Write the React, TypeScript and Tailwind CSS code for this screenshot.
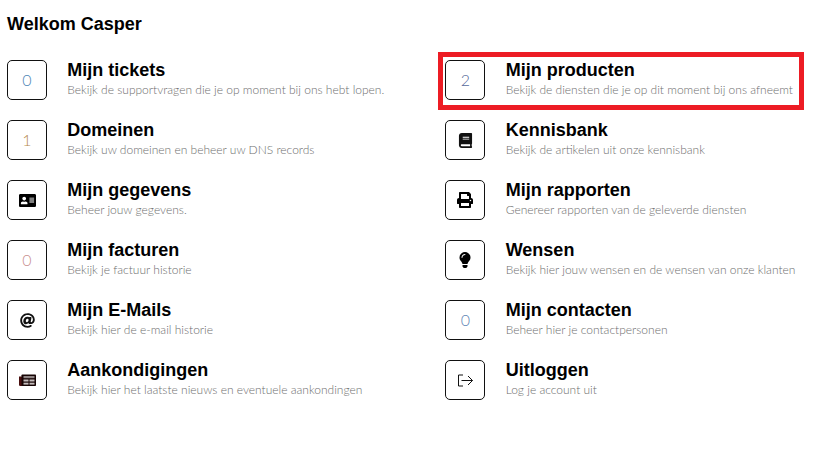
import { FaAddressCard, FaAt, FaBook, FaLightbulb, FaPrint } from 'react-icons/fa';
import type { ReactNode } from 'react';

const LogoutIcon = () => (
  <svg width="17" height="13" viewBox="0 0 17 13" fill="none" stroke="#111" strokeWidth="1">
    <path d="M6 1H1.5v11H6" />
    <path d="M4.5 6.5h11M11 2l4.5 4.5L11 11" />
  </svg>
);

const PaperIcon = () => (
  <svg width="17" height="12" viewBox="0 0 17 12">
    <path d="M0 2.5h3V12H1.2A1.2 1.2 0 0 1 0 10.8z" fill="#4a0f0f" />
    <rect x="2.5" y="0.5" width="14.5" height="11.5" rx="0.8" fill="#160404" />
    <rect x="4.5" y="2" width="11" height="2.2" fill="#8f8585" />
    <rect x="4.5" y="5.5" width="5" height="2" fill="#c4bcbc" />
    <rect x="10.5" y="5.5" width="5" height="2" fill="#c4bcbc" />
    <rect x="4.5" y="8.7" width="5" height="1.9" fill="#c4bcbc" />
    <rect x="10.5" y="8.7" width="5" height="1.9" fill="#c4bcbc" />
  </svg>
);

const Count = ({ value, color }: { value: number; color: string }) => (
  <span className={`text-[16px] font-light ${color}`}>{value}</span>
);

type Item = { title: string; text: string; icon: ReactNode; marked?: boolean };

const items: Item[] = [
  { title: 'Mijn tickets', text: 'Bekijk de supportvragen die je op moment bij ons hebt lopen.', icon: <Count value={0} color="text-[#4f86b5]" /> },
  { title: 'Mijn producten', text: 'Bekijk de diensten die je op dit moment bij ons afneemt', icon: <Count value={2} color="text-[#56689a]" />, marked: true },
  { title: 'Domeinen', text: 'Bekijk uw domeinen en beheer uw DNS records', icon: <Count value={1} color="text-[#b58a4f]" /> },
  { title: 'Kennisbank', text: 'Bekijk de artikelen uit onze kennisbank', icon: <FaBook className="text-[15px] text-[#111]" /> },
  { title: 'Mijn gegevens', text: 'Beheer jouw gegevens.', icon: <FaAddressCard className="text-[17px] text-black" /> },
  { title: 'Mijn rapporten', text: 'Genereer rapporten van de geleverde diensten', icon: <FaPrint className="text-[16px] text-black" /> },
  { title: 'Mijn facturen', text: 'Bekijk je factuur historie', icon: <Count value={0} color="text-[#c98f8f]" /> },
  { title: 'Wensen', text: 'Bekijk hier jouw wensen en de wensen van onze klanten', icon: <FaLightbulb className="text-[16px] text-black" /> },
  { title: 'Mijn E-Mails', text: 'Bekijk hier de e-mail historie', icon: <FaAt className="text-[15px] text-[#111]" /> },
  { title: 'Mijn contacten', text: 'Beheer hier je contactpersonen', icon: <Count value={0} color="text-[#5f86b5]" /> },
  { title: 'Aankondigingen', text: 'Bekijk hier het laatste nieuws en eventuele aankondingen', icon: <PaperIcon /> },
  { title: 'Uitloggen', text: 'Log je account uit', icon: <LogoutIcon /> },
];

const Row = ({ item }: { item: Item }) => (
  <div className="relative flex h-[40px] items-center gap-[20.3px]">
    {item.marked && <div className="absolute -top-[8px] -left-[7px] h-[58px] w-[366px] border-[5px] border-[#ed1c24]" />}
    <div className="flex h-[40px] w-[40px] shrink-0 items-center justify-center rounded-[5px] border border-[#111]">
      {item.icon}
    </div>
    <div className="relative -mt-[1px]">
      <div className="font-['Liberation_Sans',Arial,sans-serif] text-[18px] leading-[20px] font-bold text-black">{item.title}</div>
      <div className="text-[12px] leading-[19px] font-light text-[#6e6e6e]">{item.text}</div>
    </div>
  </div>
);

export default function App() {
  return (
    <div className="h-[459px] w-[838px] bg-white pt-[14px] pl-[7px] font-['Lato',sans-serif]">
      <h1 className="font-['Liberation_Sans',Arial,sans-serif] text-[18px] leading-[20px] font-bold text-black">Welkom Casper</h1>
      <div className="mt-[26px] grid grid-cols-[438.4px_1fr] gap-y-[20px]">
        {items.map((item) => (
          <Row key={item.title} item={item} />
        ))}
      </div>
    </div>
  );
}
